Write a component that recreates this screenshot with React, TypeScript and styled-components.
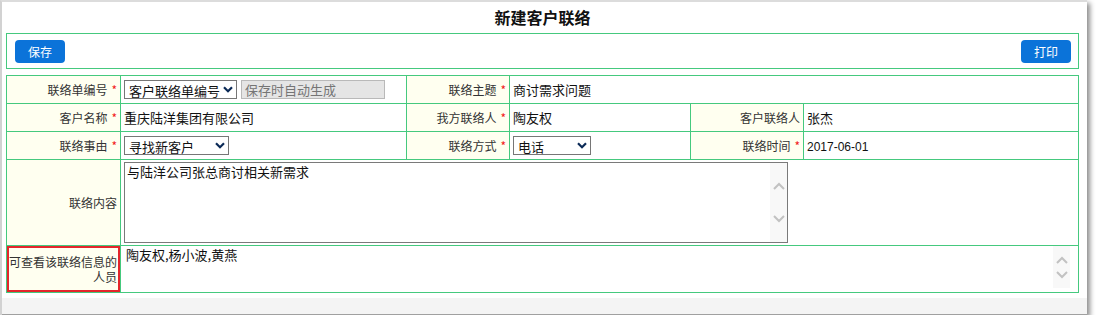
import React from 'react';
import styled, { createGlobalStyle } from 'styled-components';

const GlobalStyle = createGlobalStyle`
    html, body {
        margin: 0;
        padding: 0;
        background: #ffffff;
    }
    body {
        font-family: "Noto Sans CJK SC", "Liberation Sans", sans-serif;
        font-size: 12px;
        color: #000;
    }
`

const Panel = styled.div`
    width: 1085px;
    height: 313px;
    background: #ffffff;
    border-left: 2px solid #d2d2d2;
    border-top: 2px solid #dcdcdc;
    box-shadow: 3px 3px 5px rgba(0, 0, 0, 0.45);
    display: flex;
    flex-direction: column;
`

const Body = styled.div`
    flex: 1;
    padding: 0 8px 0 4px;
`

const Title = styled.h1`
    margin: 0;
    height: 31px;
    line-height: 30px;
    text-align: center;
    font-size: 16px;
    font-weight: bold;
    color: #111;
`

const Toolbar = styled.div`
    height: 34px;
    border: 1px solid #45c97e;
    display: flex;
    align-items: center;
    justify-content: space-between;
    padding: 0 7px 0 8px;
    margin-bottom: 6px;
`

const BlueButton = styled.button`
    width: 50px;
    height: 23px;
    border: none;
    border-radius: 4px;
    background: #0b73d9;
    color: #ffffff;
    font-family: inherit;
    font-size: 12px;
    padding: 0;
    cursor: pointer;
`

const Form = styled.table`
    width: 1072px;
    border-collapse: collapse;
    table-layout: fixed;
    td {
        border: 1px solid #45c97e;
        padding: 0;
    }
`

const Row = styled.tr<{ $h: number }>`
    height: ${p => p.$h}px;
`

const LabelCell = styled.td<{ $marked?: boolean }>`
    background: #fffff0;
    color: #333;
    text-align: right;
    padding-right: 3px !important;
    line-height: 15px;
    ${p => p.$marked && `box-shadow: inset 0 0 0 2px #e3262b;`}
`

const Star = styled.span`
    color: #f21c1c;
    margin-left: 4px;
`

const ValueCell = styled.td<{ $top?: boolean }>`
    padding-left: 3px !important;
    vertical-align: ${p => (p.$top ? 'top' : 'middle')};
    color: #111;
    font-size: 13px;
`

const Inline = styled.div`
    display: flex;
    align-items: center;
    gap: 4px;
`

const SelectWrap = styled.div<{ $w: number }>`
    position: relative;
    width: ${p => p.$w}px;
    height: 19px;
`

const Select = styled.select`
    appearance: none;
    width: 100%;
    height: 100%;
    border: 1px solid #767676;
    border-radius: 0;
    background: #fff;
    font-family: inherit;
    font-size: 13px;
    color: #111;
    padding: 0 16px 0 4px;
    margin: 0;
    outline: none;
`

const Chevron = styled.svg`
    position: absolute;
    right: 4px;
    top: 6px;
    pointer-events: none;
`

const ReadOnly = styled.input`
    width: 144px;
    height: 19px;
    box-sizing: border-box;
    border: 1px solid #b9b9b9;
    background: #e5e5e5;
    color: #7a7a7a;
    font-family: inherit;
    font-size: 13px;
    padding: 0 3px;
    margin: 0;
`

const Mono = styled.span`
    font-family: "Liberation Sans", Arial, sans-serif;
    font-size: 12px;
`

const AreaBox = styled.div<{ $w: number; $h: number; $border: boolean }>`
    width: ${p => p.$w}px;
    height: ${p => p.$h}px;
    box-sizing: border-box;
    border: ${p => (p.$border ? '1px solid #7a7a7a' : 'none')};
    display: flex;
    background: #fff;
`

const Area = styled.textarea`
    flex: 1;
    border: none;
    outline: none;
    resize: none;
    overflow: hidden;
    font-family: inherit;
    font-size: 13px;
    color: #111;
    padding: 1px 2px;
    margin: 0;
    line-height: 16px;
`

const Track = styled.div`
    width: 17px;
    background: #f8f8f8;
    display: flex;
    flex-direction: column;
    justify-content: space-around;
    align-items: center;
    padding: 6px 0;
`

const Footer = styled.div`
    height: 16px;
    background: #f4f4f4;
    border-bottom: 1px solid #a0a0a0;
`

const Down = () => (
    <Chevron width="10" height="7" viewBox="0 0 10 7">
        <path d="M1 1.2 L5 5.2 L9 1.2" fill="none" stroke="#0b2a57" strokeWidth="2.2" />
    </Chevron>
)

const Arrow = ({ up }: { up?: boolean }) => (
    <svg width="12" height="8" viewBox="0 0 12 8">
        <path d={up ? 'M1 7 L6 2 L11 7' : 'M1 1 L6 6 L11 1'} fill="none" stroke="#c2c2c2" strokeWidth="2" />
    </svg>
)

const App = () => {
    return (<>
        <GlobalStyle />
        <Panel>
            <Body>
                <Title>新建客户联络</Title>
                <Toolbar>
                    <BlueButton>保存</BlueButton>
                    <BlueButton>打印</BlueButton>
                </Toolbar>
                <Form>
                    <colgroup>
                        <col style={{ width: 114 }} />
                        <col style={{ width: 286 }} />
                        <col style={{ width: 103 }} />
                        <col style={{ width: 181 }} />
                        <col style={{ width: 113 }} />
                        <col style={{ width: 275 }} />
                    </colgroup>
                    <tbody>
                        <Row $h={28}>
                            <LabelCell>联络单编号<Star>*</Star></LabelCell>
                            <ValueCell>
                                <Inline>
                                    <SelectWrap $w={113}>
                                        <Select defaultValue="a">
                                            <option value="a">客户联络单编号</option>
                                        </Select>
                                        <Down />
                                    </SelectWrap>
                                    <ReadOnly placeholder="保存时自动生成" readOnly />
                                </Inline>
                            </ValueCell>
                            <LabelCell>联络主题<Star>*</Star></LabelCell>
                            <ValueCell colSpan={3}>商讨需求问题</ValueCell>
                        </Row>
                        <Row $h={28}>
                            <LabelCell>客户名称<Star>*</Star></LabelCell>
                            <ValueCell>重庆陆洋集团有限公司</ValueCell>
                            <LabelCell>我方联络人<Star>*</Star></LabelCell>
                            <ValueCell>陶友权</ValueCell>
                            <LabelCell>客户联络人</LabelCell>
                            <ValueCell>张杰</ValueCell>
                        </Row>
                        <Row $h={28}>
                            <LabelCell>联络事由<Star>*</Star></LabelCell>
                            <ValueCell>
                                <SelectWrap $w={105}>
                                    <Select defaultValue="a">
                                        <option value="a">寻找新客户</option>
                                    </Select>
                                    <Down />
                                </SelectWrap>
                            </ValueCell>
                            <LabelCell>联络方式<Star>*</Star></LabelCell>
                            <ValueCell>
                                <SelectWrap $w={78}>
                                    <Select defaultValue="a">
                                        <option value="a">电话</option>
                                    </Select>
                                    <Down />
                                </SelectWrap>
                            </ValueCell>
                            <LabelCell>联络时间<Star>*</Star></LabelCell>
                            <ValueCell><Mono>2017-06-01</Mono></ValueCell>
                        </Row>
                        <Row $h={86}>
                            <LabelCell>联络内容</LabelCell>
                            <ValueCell colSpan={5}>
                                <AreaBox $w={664} $h={81} $border={true}>
                                    <Area defaultValue="与陆洋公司张总商讨相关新需求" />
                                    <Track><Arrow up /><Arrow /></Track>
                                </AreaBox>
                            </ValueCell>
                        </Row>
                        <Row $h={47}>
                            <LabelCell $marked>可查看该联络信息的<br />人员</LabelCell>
                            <ValueCell colSpan={5} $top>
                                <AreaBox $w={946} $h={42} $border={false}>
                                    <Area defaultValue="陶友权,杨小波,黄燕" />
                                    <Track><Arrow up /><Arrow /></Track>
                                </AreaBox>
                            </ValueCell>
                        </Row>
                    </tbody>
                </Form>
            </Body>
            <Footer />
        </Panel>
    </>)
}

export default App;
